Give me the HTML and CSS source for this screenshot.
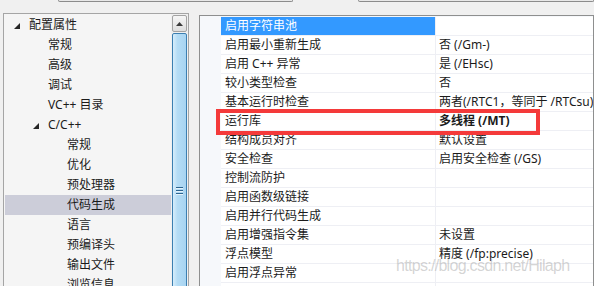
FILE: index.html
```html
<!DOCTYPE html>
<html lang="zh-CN">
<head>
<meta charset="utf-8">
<title>属性页</title>
<link rel="stylesheet" href="styles.css">
</head>
<body>
<div class="page">
  <div class="combos">
    <div class="combo combo-a"></div>
    <div class="combo combo-b"></div>
  </div>
  <div class="main">
    <div class="tree-panel">
      <ul class="tree">
        <li class="node lv0"><span class="tog"><svg width="6" height="6" viewBox="0 0 6 6"><polygon points="6,0 6,6 0,6"/></svg></span><span>配置属性</span></li>
        <li class="node lv1"><span class="tog"></span><span>常规</span></li>
        <li class="node lv1"><span class="tog"></span><span>高级</span></li>
        <li class="node lv1"><span class="tog"></span><span>调试</span></li>
        <li class="node lv1"><span class="tog"></span><span>VC++ 目录</span></li>
        <li class="node lv1"><span class="tog"><svg width="6" height="6" viewBox="0 0 6 6"><polygon points="6,0 6,6 0,6"/></svg></span><span>C/C++</span></li>
        <li class="node lv2"><span class="tog"></span><span>常规</span></li>
        <li class="node lv2"><span class="tog"></span><span>优化</span></li>
        <li class="node lv2"><span class="tog"></span><span>预处理器</span></li>
        <li class="node lv2 selected"><span class="tog"></span><span>代码生成</span></li>
        <li class="node lv2"><span class="tog"></span><span>语言</span></li>
        <li class="node lv2"><span class="tog"></span><span>预编译头</span></li>
        <li class="node lv2"><span class="tog"></span><span>输出文件</span></li>
        <li class="node lv2"><span class="tog"></span><span>浏览信息</span></li>
      </ul>
      <div class="vscroll">
        <div class="sb-btn"><svg width="7" height="4" viewBox="0 0 7 4"><polygon points="3.5,0 7,4 0,4"/></svg></div>
        <div class="sb-thumb">
          <div class="grip"><i></i><i></i><i></i></div>
        </div>
      </div>
    </div>
    <div class="grid-panel">
      <div class="margin-col"></div>
      <div class="props">
        <div class="row selected"><div class="name">启用字符串池</div><div class="val"></div></div>
        <div class="row"><div class="name">启用最小重新生成</div><div class="val">否 (/Gm-)</div></div>
        <div class="row"><div class="name">启用 C++ 异常</div><div class="val">是 (/EHsc)</div></div>
        <div class="row"><div class="name">较小类型检查</div><div class="val">否</div></div>
        <div class="row"><div class="name">基本运行时检查</div><div class="val">两者(/RTC1，等同于 /RTCsu) (/RTC1)</div></div>
        <div class="row"><div class="name">运行库</div><div class="val bold">多线程 (/MT)</div></div>
        <div class="row"><div class="name">结构成员对齐</div><div class="val">默认设置</div></div>
        <div class="row"><div class="name">安全检查</div><div class="val">启用安全检查 (/GS)</div></div>
        <div class="row"><div class="name">控制流防护</div><div class="val"></div></div>
        <div class="row"><div class="name">启用函数级链接</div><div class="val"></div></div>
        <div class="row"><div class="name">启用并行代码生成</div><div class="val"></div></div>
        <div class="row"><div class="name">启用增强指令集</div><div class="val">未设置</div></div>
        <div class="row"><div class="name">浮点模型</div><div class="val">精度 (/fp:precise)</div></div>
        <div class="row"><div class="name">启用浮点异常</div><div class="val"></div></div>
        <div class="row"><div class="name"></div><div class="val"></div></div>
      </div>
    </div>
  </div>
  <div class="highlight"></div>
  <div class="watermark">https://blog.csdn.net/Hilaph</div>
</div>
</body>
</html>
```

FILE: styles.css
```css
html, body {
  margin: 0;
  padding: 0;
  width: 594px;
  height: 286px;
  overflow: hidden;
  background: #f0f0f0;
}

.page {
  position: relative;
  width: 594px;
  height: 286px;
  overflow: hidden;
  font-family: "Noto Sans", "Noto Sans CJK SC", sans-serif;
  font-size: 12px;
  color: #1b1b1b;
}

.combos {
  display: flex;
  height: 2px;
}

.combo {
  height: 1px;
  border: 1px solid #8c8c8c;
  border-top: none;
  border-radius: 0 0 3px 3px;
  background: #e8e8e8;
}

.combo-a {
  margin-left: 58px;
  width: 258px;
}

.combo-b {
  margin-left: 65px;
  width: 260px;
}

.main {
  display: flex;
  align-items: flex-start;
}

/* left tree panel */
.tree-panel {
  display: flex;
  margin-left: 3px;
  margin-top: 11px;
  width: 184px;
  height: 300px;
  border: 1px solid #a5a5a5;
  background: #f5f5f5;
}

.tree {
  list-style: none;
  margin: 0;
  padding: 1px 0 0 1px;
  width: 166px;
}

.node {
  display: flex;
  align-items: center;
  height: 20px;
  line-height: 20px;
  white-space: nowrap;
}

.node.selected {
  background: #cccdd9;
}

.lv0 { padding-left: 9px; }
.lv1 { padding-left: 28px; }
.lv2 { padding-left: 47px; }

.tog {
  display: flex;
  align-items: center;
  width: 15px;
  height: 20px;
  padding-top: 1px;
  box-sizing: border-box;
}

.tog svg {
  fill: #262626;
}

.vscroll {
  width: 17px;
  padding-left: 1px;
  box-sizing: border-box;
  background: #f0f0f0;
}

.sb-btn {
  display: flex;
  align-items: center;
  justify-content: center;
  margin-top: 1px;
  width: 15px;
  height: 17px;
  box-sizing: border-box;
  border: 1px solid #a3a3a3;
  border-radius: 2px;
  background: linear-gradient(to bottom, #f6f6f6, #dedede);
}

.sb-btn svg {
  fill: #3a3a3a;
}

.sb-thumb {
  display: flex;
  justify-content: center;
  margin-top: 1px;
  width: 15px;
  height: 290px;
  box-sizing: border-box;
  border: 1px solid #3c7fb1;
  border-radius: 2px;
  background: linear-gradient(to right, #d6edfb 0%, #b4dcf5 35%, #a8d4f1 100%);
}

.grip {
  display: flex;
  flex-direction: column;
  gap: 2px;
  margin-top: 153px;
  width: 7px;
}

.grip i {
  display: block;
  height: 1px;
  background: #2d6591;
  box-shadow: 0 1px 0 #e6f4fc;
}

/* right property grid */
.grid-panel {
  display: flex;
  margin-left: 10px;
  margin-top: 13px;
  width: 460px;
  height: 300px;
  border: 1px solid #8e8f8f;
  background: #f6f8fb;
}

.margin-col {
  width: 21px;
  flex: none;
}

.props {
  flex: 1;
  padding-top: 1px;
  background: #f6f8fb;
}

.row {
  display: grid;
  grid-template-columns: 214px 1fr;
  height: 19px;
  box-sizing: border-box;
  border-bottom: 1px solid #eeeff4;
  background: #ffffff;
}

.name, .val {
  padding-left: 4px;
  line-height: 18px;
  white-space: nowrap;
  overflow: hidden;
}

.val {
  padding-left: 3px;
  border-left: 1px solid #eeeff4;
}

.row.selected .name {
  background: #3399ff;
  color: #ffffff;
}

.bold {
  font-weight: bold;
}

.highlight {
  position: absolute;
  left: 216px;
  top: 109px;
  width: 324px;
  height: 26px;
  box-sizing: border-box;
  border: 4px solid #f43a3a;
}

.watermark {
  position: absolute;
  left: 396px;
  top: 257px;
  font-family: "Liberation Sans", Arial, sans-serif;
  font-size: 16px;
  letter-spacing: -0.7px;
  color: rgba(160, 160, 160, 0.45);
  white-space: nowrap;
}
```
